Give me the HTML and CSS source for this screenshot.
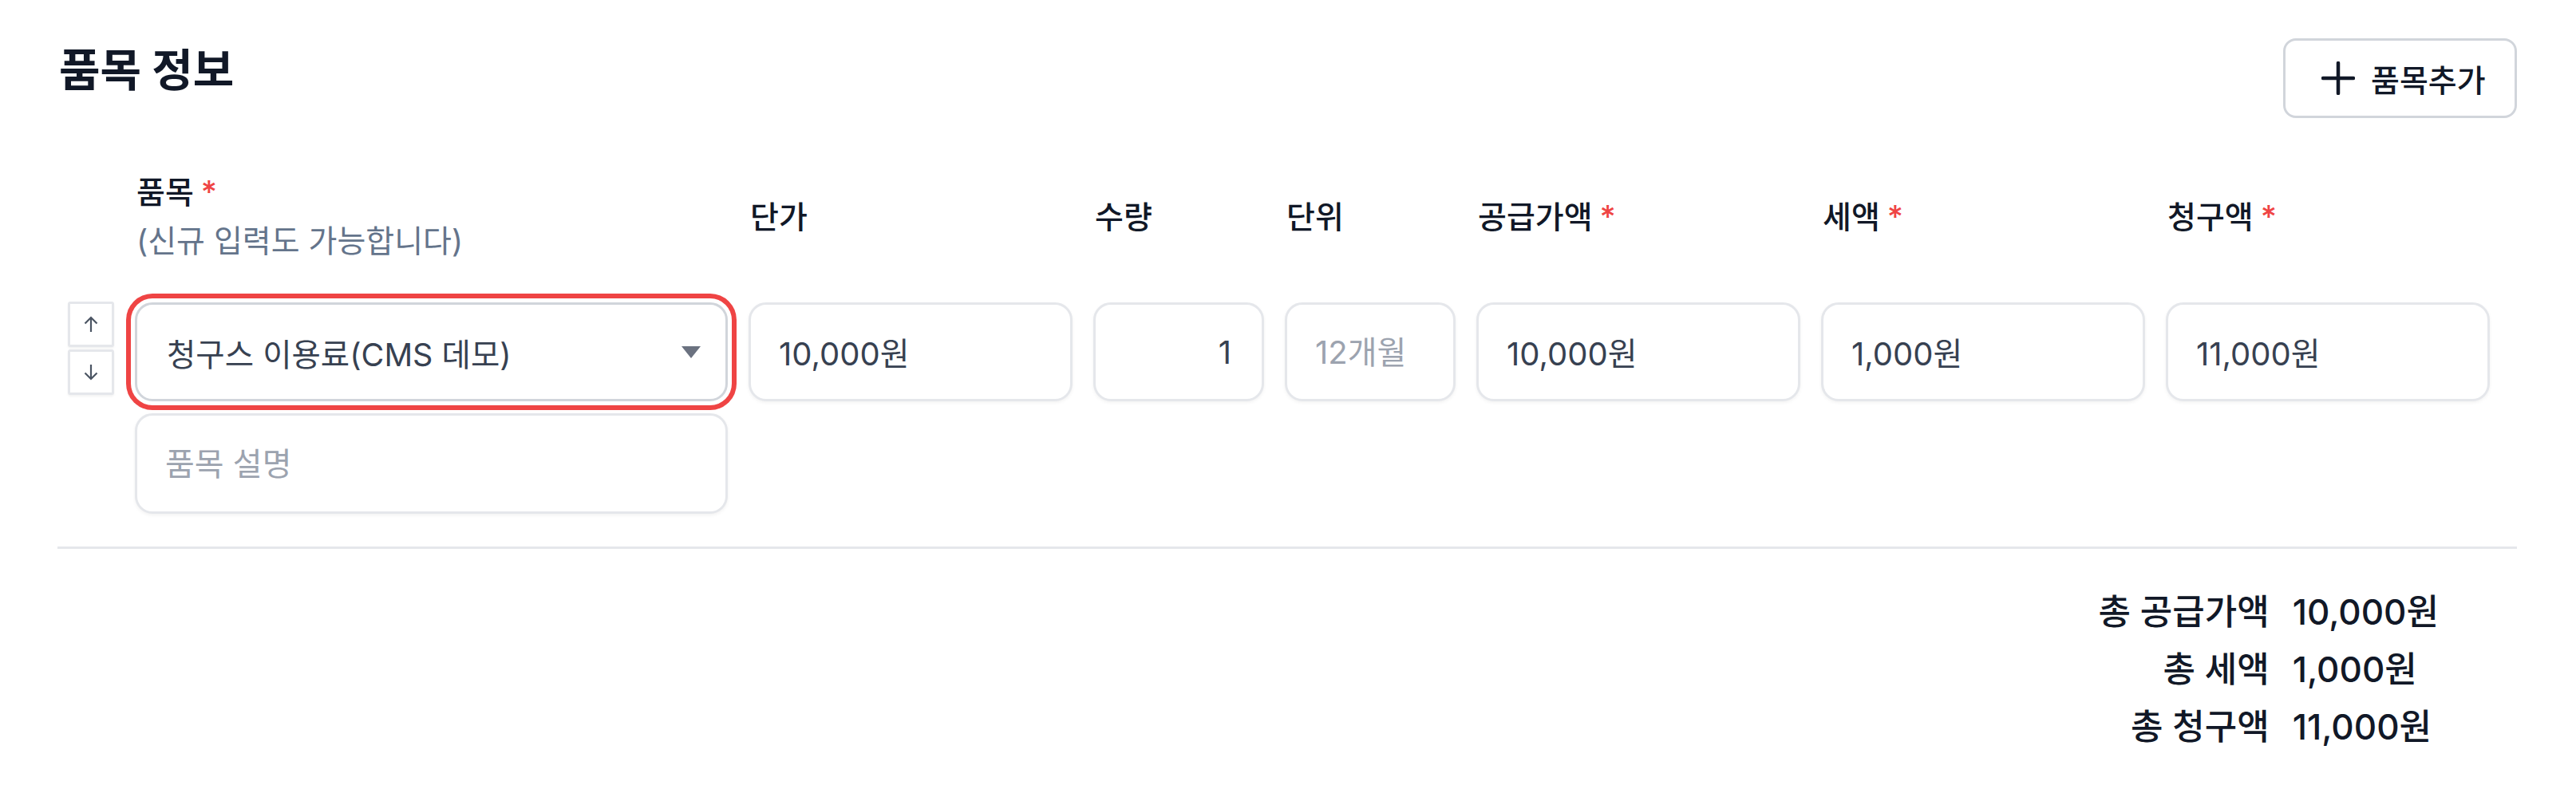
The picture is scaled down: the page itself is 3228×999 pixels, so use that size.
FILE: index.html
```html
<!DOCTYPE html>
<html lang="ko">
<head>
<meta charset="utf-8">
<title>품목 정보</title>
<link rel="stylesheet" href="styles.css">
</head>
<body>
<section class="section">
  <div class="head">
    <h2 class="title">품목 정보</h2>
    <button class="add-btn" type="button">
      <svg class="plus" viewBox="0 0 42 42" width="42" height="42" aria-hidden="true"><path d="M21 2v38M2 21h38" stroke="#111827" stroke-width="4.5" stroke-linecap="round" fill="none"/></svg>
      <span>품목추가</span>
    </button>
  </div>

  <div class="cols labels">
    <div></div>
    <div class="label">품목<span class="req">*</span><br><span class="hint">(신규 입력도 가능합니다)</span></div>
    <div class="label">단가</div>
    <div class="label">수량</div>
    <div class="label">단위</div>
    <div class="label">공급가액<span class="req">*</span></div>
    <div class="label">세액<span class="req">*</span></div>
    <div class="label">청구액<span class="req">*</span></div>
  </div>

  <div class="cols row">
    <div class="handle">
      <button class="arrow-btn" type="button" aria-label="위로">
        <svg viewBox="0 0 18 21" width="18" height="21"><path d="M9 20V2M1.5 9.5L9 2l7.5 7.5" stroke="#4b5563" stroke-width="2.2" fill="none"/></svg>
      </button>
      <button class="arrow-btn" type="button" aria-label="아래로">
        <svg viewBox="0 0 18 21" width="18" height="21"><path d="M9 1v18M1.5 11.5L9 19l7.5-7.5" stroke="#4b5563" stroke-width="2.2" fill="none"/></svg>
      </button>
    </div>
    <div class="item">
      <div class="select"><span>청구스 이용료(CMS 데모)</span><span class="caret"></span></div>
      <input class="field desc" type="text" placeholder="품목 설명">
    </div>
    <input class="field" type="text" value="10,000원">
    <input class="field num" type="text" value="1">
    <input class="field" type="text" placeholder="12개월">
    <input class="field" type="text" value="10,000원">
    <input class="field" type="text" value="1,000원">
    <input class="field" type="text" value="11,000원">
  </div>

  <hr class="divider">

  <div class="summary">
    <div class="k">총 공급가액</div><div class="v">10,000원</div>
    <div class="k">총 세액</div><div class="v">1,000원</div>
    <div class="k">총 청구액</div><div class="v">11,000원</div>
  </div>
</section>
</body>
</html>
```
FILE: styles.css
```css
* { box-sizing: border-box; }

body {
  margin: 0;
  background: #ffffff;
  font-family: Inter, "Noto Sans CJK KR", sans-serif;
  color: #111827;
}

.section {
  padding: 48px 74px 0 72px;
}

.head {
  display: flex;
  justify-content: space-between;
  align-items: flex-start;
}

.title {
  margin: 0;
  padding-left: 2px;
  font-size: 56px;
  font-weight: 700;
  line-height: 80px;
  color: #111827;
}

.add-btn {
  width: 293px;
  height: 100px;
  border: 3px solid #d1d5db;
  border-radius: 16px;
  background: #ffffff;
  display: flex;
  align-items: center;
  gap: 20px;
  padding: 0 0 0 45px;
  font-family: Inter, "Noto Sans CJK KR", sans-serif;
  font-size: 39px;
  font-weight: 500;
  color: #111827;
}

.plus { flex: none; }

.cols {
  display: grid;
  grid-template-columns: 58px 743px 406px 214px 214px 406px 406px 406px;
  column-gap: 26px;
  padding-left: 13px;
}

.labels {
  margin-top: 62px;
  height: 120px;
  align-items: center;
}

.label {
  font-size: 39px;
  font-weight: 500;
  line-height: 61px;
  color: #111827;
  white-space: nowrap;
  padding-left: 2px;
}

.req {
  color: #ef4444;
  margin-left: 9px;
}

.hint {
  color: #64748b;
  font-weight: 400;
}

.row {
  margin-top: 49px;
  align-items: start;
}

.handle {
  display: flex;
  flex-direction: column;
  gap: 3px;
  margin-top: -1px;
}

.arrow-btn {
  height: 57px;
  padding: 0;
  border: 3px solid #e5e7eb;
  border-radius: 3px;
  background: #ffffff;
  display: flex;
  align-items: center;
  justify-content: center;
  box-shadow: 0 2px 3px rgba(0, 0, 0, 0.05);
}

.item {
  display: flex;
  flex-direction: column;
  gap: 15px;
}

.select {
  height: 124px;
  border: 3px solid #d1d5db;
  border-radius: 22px;
  box-shadow: 0 0 0 5px #ffffff, 0 0 0 11px #ef4444;
  display: flex;
  align-items: center;
  justify-content: space-between;
  padding: 0 31px 0 37px;
  font-size: 39.5px;
  color: #374151;
  background: #ffffff;
}

.caret {
  width: 0;
  height: 0;
  border-left: 12px solid transparent;
  border-right: 12px solid transparent;
  border-top: 15px solid #6b7280;
}

.field {
  width: 100%;
  height: 124px;
  margin: 0;
  border: 3px solid #e5e7eb;
  border-radius: 22px;
  padding: 0 35px;
  background: #ffffff;
  font-family: Inter, "Noto Sans CJK KR", sans-serif;
  font-size: 40px;
  font-weight: 400;
  color: #374151;
  box-shadow: 0 2px 4px rgba(0, 0, 0, 0.05);
  outline: none;
}

.field::placeholder { color: #9ca3af; }

.field.num {
  text-align: right;
  padding-right: 38px;
}

.field.desc { height: 126px; }

.divider {
  border: 0;
  border-top: 3px solid #e5e7eb;
  margin: 41px 0 0;
}

.summary {
  display: grid;
  grid-template-columns: auto auto;
  column-gap: 29px;
  justify-content: end;
  padding-right: 98px;
  margin-top: 43px;
  font-size: 44px;
  font-weight: 500;
  line-height: 72px;
  color: #111827;
}

.summary .k { text-align: right; }
```
